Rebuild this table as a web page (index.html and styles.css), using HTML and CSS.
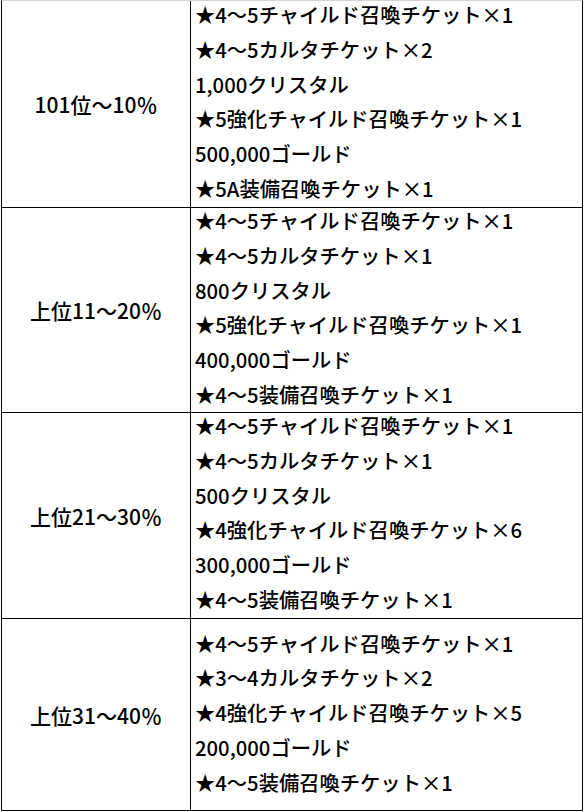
FILE: index.html
```html
<!DOCTYPE html>
<html lang="ja">
<head>
<meta charset="utf-8">
<link rel="stylesheet" href="styles.css">
</head>
<body>
<div class="table">
  <div class="row r1">
    <div class="rank">101位～10％</div>
    <div class="items">
      <div>★4～5チャイルド召喚チケット×1</div>
      <div>★4～5カルタチケット×2</div>
      <div>1,000クリスタル</div>
      <div>★5強化チャイルド召喚チケット×1</div>
      <div>500,000ゴールド</div>
      <div>★5A装備召喚チケット×1</div>
    </div>
  </div>
  <div class="row r2">
    <div class="rank">上位11～20％</div>
    <div class="items">
      <div>★4～5チャイルド召喚チケット×1</div>
      <div>★4～5カルタチケット×1</div>
      <div>800クリスタル</div>
      <div>★5強化チャイルド召喚チケット×1</div>
      <div>400,000ゴールド</div>
      <div>★4～5装備召喚チケット×1</div>
    </div>
  </div>
  <div class="row r3">
    <div class="rank">上位21～30％</div>
    <div class="items">
      <div>★4～5チャイルド召喚チケット×1</div>
      <div>★4～5カルタチケット×1</div>
      <div>500クリスタル</div>
      <div>★4強化チャイルド召喚チケット×6</div>
      <div>300,000ゴールド</div>
      <div>★4～5装備召喚チケット×1</div>
    </div>
  </div>
  <div class="row r4">
    <div class="rank">上位31～40％</div>
    <div class="items">
      <div>★4～5チャイルド召喚チケット×1</div>
      <div>★3～4カルタチケット×2</div>
      <div>★4強化チャイルド召喚チケット×5</div>
      <div>200,000ゴールド</div>
      <div>★4～5装備召喚チケット×1</div>
    </div>
  </div>
</div>
</body>
</html>
```
FILE: styles.css
```css
html, body {
  margin: 0;
  padding: 0;
  background: #fff;
}
body {
  font-family: "Noto Sans CJK JP", "Noto Sans", sans-serif;
  font-size: 20.3px;
  font-weight: 500;
  color: #000;
}
.table {
  margin-left: 1px;
  width: 582px;
  box-sizing: border-box;
  border-left: 1px solid #000;
  border-right: 1px solid #000;
  border-bottom: 1px solid #000;
  border-top: 1px solid #d4d4d4;
}
.row {
  display: grid;
  grid-template-columns: 189px 1fr;
  border-top: 1px solid #000;
  box-sizing: border-box;
}
.row.r1 {
  border-top: none;
  height: 206px;
}
.row.r2 { height: 205px; }
.row.r3 { height: 206px; }
.row.r4 { height: 192px; }
.rank {
  display: flex;
  align-items: center;
  justify-content: center;
  border-right: 1px solid #000;
  font-size: 21px;
}
.items {
  padding-left: 4px;
  line-height: 34.8px;
  white-space: nowrap;
  display: flex;
  flex-direction: column;
  justify-content: center;
}
.r1 .items { justify-content: flex-start; margin-top: -4px; }
.r2 .items, .r3 .items { justify-content: flex-start; margin-top: -5px; }
.r4 .items { margin-top: -4px; }
```
